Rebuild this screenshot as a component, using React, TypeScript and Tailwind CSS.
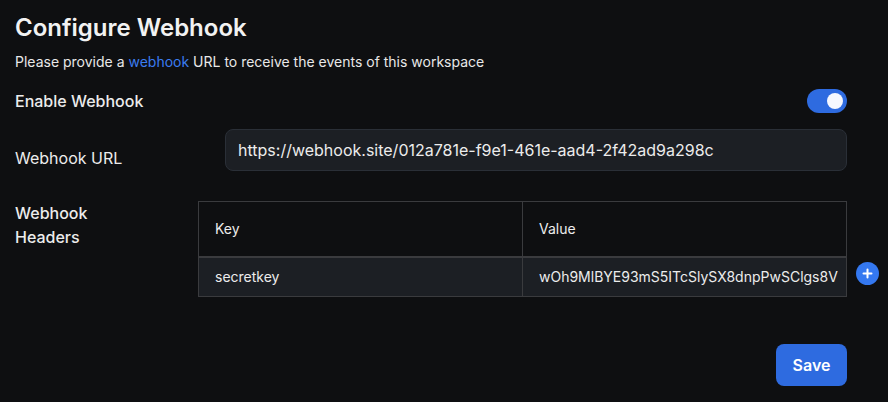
import React, { useState } from 'react';

const WebhookSettings: React.FC = () => {
  const [enabled, setEnabled] = useState(true);
  const [url, setUrl] = useState('https://webhook.site/012a781e-f9e1-461e-aad4-2f42ad9a298c');
  const headers = [{ key: 'secretkey', value: 'wOh9MlBYE93mS5ITcSlySX8dnpPwSClgs8V' }];

  return (
    <div
      className="min-h-[402px] w-full bg-[#0e0f11] pl-[15px] pr-[41px] pt-3 text-[#ececec]"
      style={{ fontFamily: 'Inter, "Noto Sans", sans-serif' }}
    >
      <h1 className="text-2xl font-semibold leading-8 text-[#f2f2f2]">Configure Webhook</h1>
      <p className="mt-2 text-sm leading-5 text-[#e8e8e8]">
        Please provide a <span className="text-[#3b7cf0]">webhook</span> URL to receive the events of this workspace
      </p>

      {/* Enable toggle */}
      <div className="mt-[17px] flex h-6 items-center justify-between">
        <span className="text-base font-medium">Enable Webhook</span>
        <button
          onClick={() => setEnabled(!enabled)}
          className={`flex h-6 w-10 items-center rounded-full px-[4px] ${enabled ? 'justify-end bg-[#2e6be0]' : 'justify-start bg-[#3a3d42]'}`}
        >
          <span className="block h-4 w-4 rounded-full bg-[#f6f8ff]" />
        </button>
      </div>

      {/* URL */}
      <div className="mt-4 flex items-start">
        <label className="mt-[17px] w-[210px] shrink-0 text-base leading-6">Webhook URL</label>
        <input
          value={url}
          onChange={(e) => setUrl(e.target.value)}
          className="h-[42px] flex-1 rounded-lg border border-[#2a2f37] bg-[#1c1f24] px-3 text-base text-[#ececec] outline-none"
        />
      </div>

      {/* Headers */}
      <div className="mt-[30px] flex items-start">
        <div className="w-[183px] shrink-0 text-base font-medium leading-6">
          Webhook
          <br />
          Headers
        </div>
        <div className="relative flex-1">
          <table className="w-full table-fixed border-collapse text-sm">
            <thead>
              <tr className="h-[55px]">
                <th className="border border-[#3a3b3e] px-4 text-left font-normal">Key</th>
                <th className="border border-[#3a3b3e] px-4 text-left font-normal">Value</th>
              </tr>
            </thead>
            <tbody>
              {headers.map((h) => (
                <tr key={h.key} className="h-[40px] bg-[#1c1f24]">
                  <td className="border border-t-2 border-[#3a3b3e] px-4">{h.key}</td>
                  <td className="overflow-hidden whitespace-nowrap border border-t-2 border-[#3a3b3e] px-4">{h.value}</td>
                </tr>
              ))}
            </tbody>
          </table>
          <button className="absolute -right-[32px] bottom-[12px] flex h-[23px] w-[23px] items-center justify-center rounded-full bg-[#3478f0] text-white">
            <svg width="11" height="11" viewBox="0 0 11 11" fill="none" stroke="currentColor" strokeWidth="2" strokeLinecap="round">
              <path d="M5.5 1.5v8M1.5 5.5h8" />
            </svg>
          </button>
        </div>
      </div>

      <div className="mt-[47px] flex justify-end">
        <button className="h-[42px] w-[71px] rounded-lg bg-[#2e6be0] text-base font-semibold text-white">Save</button>
      </div>
    </div>
  );
};

export default function App() {
  return <WebhookSettings />;
}
